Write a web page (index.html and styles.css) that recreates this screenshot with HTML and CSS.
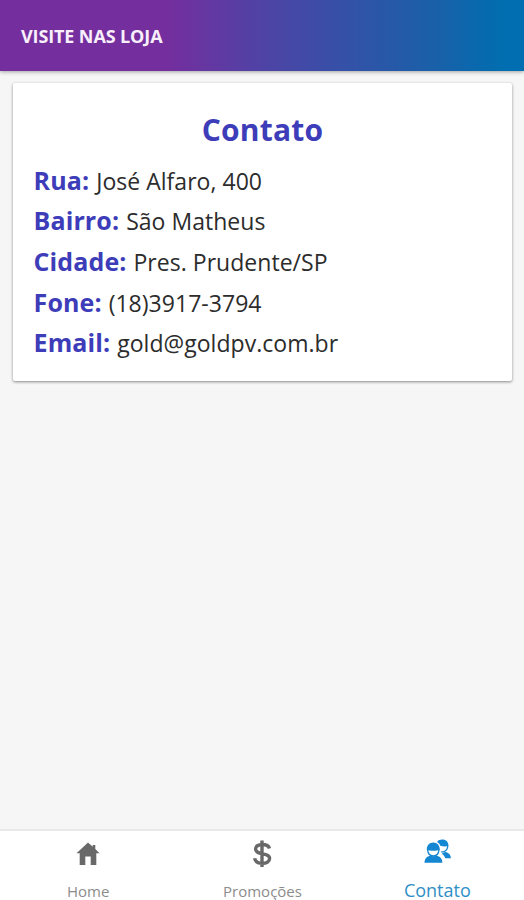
FILE: index.html
```
<!DOCTYPE html>
<html lang="pt-br">
<head>
  <meta charset="UTF-8">
  <meta name="viewport" content="width=device-width, initial-scale=1">
  <title>Contato</title>
  <link rel="stylesheet" href="styles.css">
</head>
<body>

  <header class="toolbar">
    <h1 class="toolbar-title">VISITE NAS LOJA</h1>
  </header>

  <main class="content">
    <section class="card">
      <h2>Contato</h2>
      <p><strong>Rua:</strong> José Alfaro, 400</p>
      <p><strong>Bairro:</strong> São Matheus</p>
      <p><strong>Cidade:</strong> Pres. Prudente/SP</p>
      <p><strong>Fone:</strong> (18)3917-3794</p>
      <p><strong>Email:</strong> gold@goldpv.com.br</p>
    </section>
  </main>

  <nav class="tabs">
    <a class="tab">
      <svg width="28" height="28" viewBox="0 0 28 28">
        <path d="M14 2.5 2.5 13.2h3.2V25h5.6v-8.6h5.4V25h5.6V13.2h3.2L21.3 9V5h-2.6v1.8z"/>
      </svg>
      <span>Home</span>
    </a>
    <a class="tab">
      <svg width="28" height="28" viewBox="0 0 28 28">
        <path class="line" d="M21.5 8.4C20.7 5.8 18 4.5 14.2 4.5c-4 0-6.6 1.8-6.6 4.6 0 6.6 14 3 14 9.4 0 2.9-2.9 4.8-7.2 4.8-4.4 0-7.2-1.8-7.8-5M14 .5v26.5"/>
      </svg>
      <span>Promoções</span>
    </a>
    <a class="tab active">
      <svg width="28" height="28" viewBox="-1 0 28 28">
        <!-- pessoa de trás -->
        <path d="M13 3C14.2 1.2 16 .5 18.2.5c4 0 6.3 2.6 6.3 6.6-2.8.6-6 .4-8.2-.4C15.8 5 14.6 3.7 13 3z"/>
        <path class="thin" d="M23.8 6.8c-.2 3-1.9 5.4-4.4 6.1h-2.2"/>
        <path d="M17.6 14.7l3.5-1.7c4 .8 5.6 2.8 5.8 6.2h-5.6c-.8-2.2-1.9-3.4-3.7-4.5z"/>
        <!-- pessoa da frente -->
        <path d="M2.8 11C2.6 6.4 5.2 3.4 9.3 3.4s6.7 3 6.5 7.6c-3.6.9-9.4.9-13 0z"/>
        <path class="thin" d="M3.6 10.6c.3 3.9 2.5 6.3 5.7 6.3s5.4-2.4 5.7-6.3"/>
        <path d="M.5 23.8c.2-4.3 2.2-6.3 6.2-7.3 1.7 1 3.8 1 5.5 0 4 1 6 3 6.2 7.3z"/>
      </svg>
      <span>Contato</span>
    </a>
  </nav>

</body>
</html>
```
FILE: styles.css
```
* {
  box-sizing: border-box;
}

body {
  margin: 0;
  height: 100vh;
  display: flex;
  flex-direction: column;
  background: #f6f6f6;
  font-family: "Open Sans", "Noto Sans", sans-serif;
}

.toolbar {
  height: 71px;
  flex: none;
  display: flex;
  align-items: center;
  padding-left: 21px;
  background: linear-gradient(90deg, #742e9e 0%, #742e9e 32%, #4f43a5 50%, #3153a8 68%, #1861a9 84%, #006eb0 96%);
  box-shadow: 0 1px 4px rgba(0, 0, 0, 0.35);
}

.toolbar-title {
  margin: 0;
  color: #f8effb;
  font-size: 18px;
  font-weight: 700;
  letter-spacing: -0.12px;
}

.content {
  flex: 1;
  padding: 12px 12px 0 13px;
}

.card {
  height: 298px;
  padding: 26px 20px;
  background: #fff;
  border-radius: 2px;
  box-shadow: 0 1px 3px rgba(0, 0, 0, 0.45);
}

.card h2 {
  margin: 0 0 8.5px;
  color: #3e3db9;
  font-size: 30px;
  line-height: 42px;
  letter-spacing: 0.2px;
  text-align: center;
}

.card p {
  height: 40.7px;
  margin: 0;
  padding-left: 0.6px;
  color: #2c2c2c;
  font-size: 23px;
  line-height: 40.7px;
  letter-spacing: 0.03px;
  white-space: nowrap;
}

.card strong {
  margin-right: 1px;
  color: #3e3db9;
  font-size: 25px;
  font-weight: 700;
  letter-spacing: 0.1px;
}

.tabs {
  height: 71px;
  flex: none;
  display: flex;
  padding-left: 1px;
  background: #fff;
  border-top: 2px solid #e9e9e9;
}

.tab {
  flex: 1;
  display: flex;
  flex-direction: column;
  align-items: center;
  padding-top: 9px;
  color: #8c8c8c;
  font-size: 15px;
  line-height: 16px;
}

.tab svg {
  margin-bottom: 15px;
  fill: #686868;
}

.tab .line {
  fill: none;
  stroke: #686868;
  stroke-width: 3.4;
}

.tab .thin {
  fill: none;
  stroke: #1387d2;
  stroke-width: 1.3;
}

.tab.active {
  padding-top: 8px;
  color: #2f8fc6;
  font-size: 18px;
}

.tab.active svg {
  fill: #1387d2;
}

.tab.active span {
  padding-left: 1px;
}
```
